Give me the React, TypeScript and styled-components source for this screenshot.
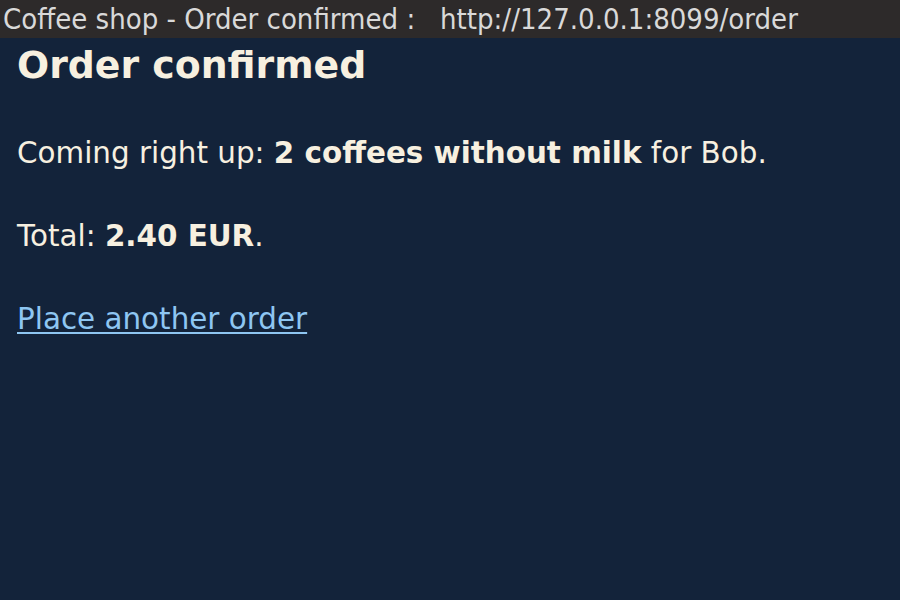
import React from "react";
import styled, { createGlobalStyle } from "styled-components";

const Global = createGlobalStyle`
  html, body { margin: 0; padding: 0; background: #13233a; }
  body { font-family: "DejaVu Sans", Verdana, sans-serif; }
`;

const Page = styled.div`
  width: 900px;
  height: 600px;
  background: #13233a;
  display: flex;
  flex-direction: column;
  overflow: hidden;
`;

const TitleBar = styled.div`
  height: 38px;
  background: #2d2a2a;
  color: #d9d9d9;
  font-family: "DejaVu Sans Condensed", "DejaVu Sans", sans-serif;
  font-stretch: condensed;
  font-size: 29px;
  line-height: 38px;
  padding-left: 3px;
  white-space: pre;
  overflow: hidden;
`;

const Content = styled.main`
  display: flex;
  flex-direction: column;
  align-items: flex-start;
  padding: 0 17px;
  color: #f7f0e0;
`;

const Heading = styled.h1`
  margin: 4px 0 0;
  font-size: 37.8px;
  font-weight: bold;
  line-height: 46px;
`;

const Para = styled.p<{ $top: number }>`
  margin: ${(p) => p.$top}px 0 0;
  font-size: 29.4px;
  line-height: 36px;
`;

const Link = styled.a`
  color: #8ec6f2;
  text-decoration: underline;
  text-underline-offset: 3px;
`;

export default function App() {
  return (
    <Page>
      <Global />
      <TitleBar>{"Coffee shop - Order confirmed :   http://127.0.0.1:8099/order"}</TitleBar>
      <Content>
        <Heading>Order confirmed</Heading>
        <Para $top={47}>
          Coming right up: <b>2 coffees without milk</b> for Bob.
        </Para>
        <Para $top={47}>
          Total: <b>2.40 EUR</b>.
        </Para>
        <Para $top={47}>
          <Link href="#">Place another order</Link>
        </Para>
      </Content>
    </Page>
  );
}
